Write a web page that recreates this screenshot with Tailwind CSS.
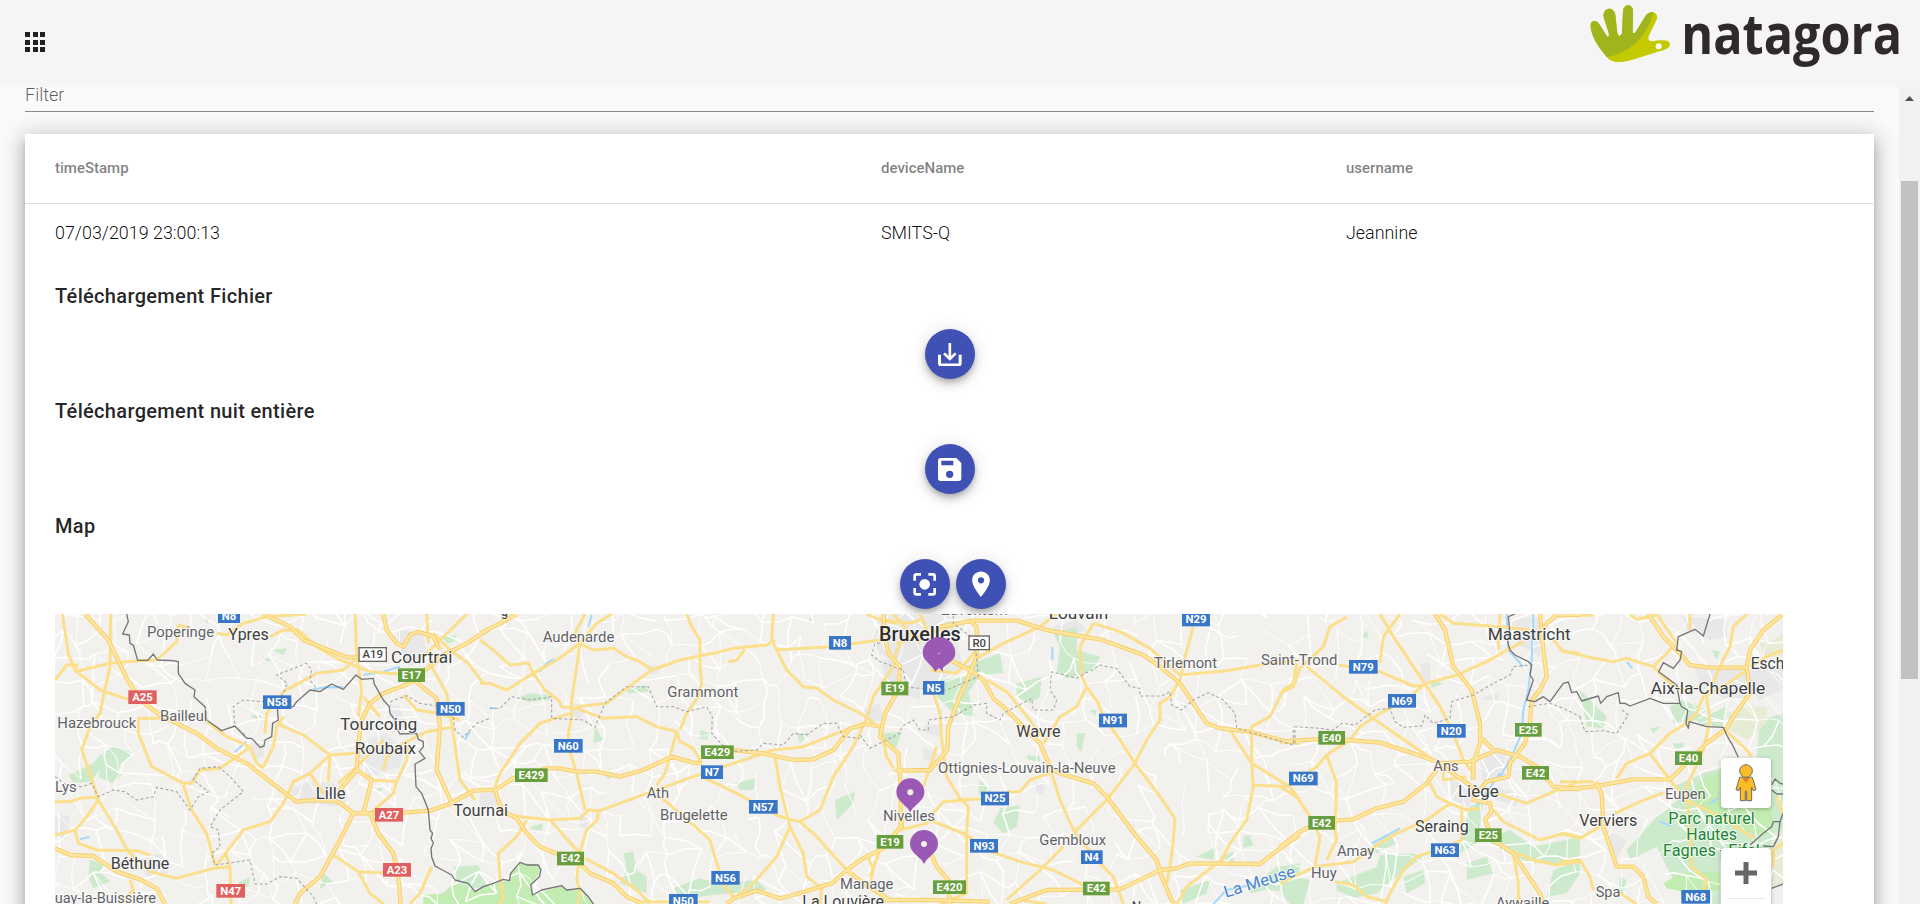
<!DOCTYPE html>
<html lang="fr">
<head>
<meta charset="utf-8">
<title>natagora</title>
<script src="https://cdn.jsdelivr.net/npm/@tailwindcss/browser@4"></script>
</head>
<body class="h-screen overflow-hidden bg-[#fafafa] font-['Roboto',sans-serif] text-black/87 flex flex-col">
<header class="h-[87px] shrink-0 bg-[#f5f5f5] flex items-start justify-between relative z-10">
  <button class="mt-8 ml-[25px] grid grid-cols-3 gap-[2.5px] w-5 h-5" aria-label="menu">
    <span class="bg-[#212121]"></span><span class="bg-[#212121]"></span><span class="bg-[#212121]"></span>
    <span class="bg-[#212121]"></span><span class="bg-[#212121]"></span><span class="bg-[#212121]"></span>
    <span class="bg-[#212121]"></span><span class="bg-[#212121]"></span><span class="bg-[#212121]"></span>
  </button>
  <svg class="w-[360px] h-[87px]" viewBox="0 0 1080 261">
    <defs><clipPath id="hand"><path d="M92 84C86 62 110 54 120 76L142 110Q149 112 146 98L131 52C126 22 161 16 166 44L172 100Q178 117 186 100L189 32C191 10 218 10 219 32L218 95Q219 104 227 96L254 52C264 30 296 32 291 56L266 109Q262 122 275 124C298 120 330 116 330 133C330 148 305 152 285 158L207 182C172 190 152 188 138 168C114 140 97 112 92 84Z"/></clipPath></defs>
    <g clip-path="url(#hand)"><rect width="340" height="200" fill="#c5c900"/><path d="M80 0H280V40Q262 100 222 134Q185 164 138 172L80 170Z" fill="#a0b41e"/></g>
    <circle cx="296" cy="139" r="9" fill="#fff"/>
    <text x="364" y="163" textLength="662" lengthAdjust="spacingAndGlyphs" font-family="Open Sans" font-weight="700" font-size="168" fill="#30292a">natagora</text>
  </svg>
</header>
<div class="flex flex-1 min-h-0">
  <main class="flex-1 min-w-0 overflow-hidden pl-[25px] pr-[25px]">
    <div class="h-[25px] border-b border-black/45 text-[18px] leading-[16px] font-light text-black/65"><span class="block">Filter</span></div>
    <section class="mt-[22px] h-[900px] bg-white shadow-[0_5px_6px_-3px_rgba(0,0,0,0.2),0_9px_12px_1px_rgba(0,0,0,0.14),0_3px_22px_3px_rgba(0,0,0,0.2)]">
      <div class="h-[70px] border-b border-black/12 px-[30px] grid grid-cols-[826px_465px_1fr] items-center text-[15px] font-medium text-black/50">
        <span>timeStamp</span><span>deviceName</span><span>username</span>
      </div>
      <div class="h-[60px] pb-0.5 px-[30px] grid grid-cols-[826px_465px_1fr] items-center text-[17.9px] font-light text-black/95">
        <span>07/03/2019 23:00:13</span><span>SMITS-Q</span><span>Jeannine</span>
      </div>
      <div class="pt-4 px-[30px]">
        <h2 class="text-[20px] leading-8 font-medium tracking-[0.33px]"><span>Téléchargement Fichier</span></h2>
        <div class="pt-[17px] pb-4 flex justify-center">
          <button class="size-[50px] rounded-full bg-[#3f51b5] flex items-center justify-center shadow-[0_3px_5px_-1px_rgba(0,0,0,0.2),0_6px_10px_0_rgba(0,0,0,0.14),0_1px_18px_0_rgba(0,0,0,0.12)]">
            <svg class="w-6 h-6" viewBox="0 0 72 72" fill="none" stroke="#fff"><path d="M4.500 38V64Q4.500 69 9.500 69H61.500Q66.500 69 66.500 64V38" stroke-width="9"/><path d="M35.500 3V51M18 34L35.500 51L53 34" stroke-width="8"/></svg>
          </button>
        </div>
        <h2 class="text-[20px] leading-8 font-medium tracking-[0.33px]"><span>Téléchargement nuit entière</span></h2>
        <div class="pt-[17px] pb-4 flex justify-center">
          <button class="size-[50px] rounded-full bg-[#3f51b5] flex items-center justify-center shadow-[0_3px_5px_-1px_rgba(0,0,0,0.2),0_6px_10px_0_rgba(0,0,0,0.14),0_1px_18px_0_rgba(0,0,0,0.12)]">
            <svg class="w-6 h-6" viewBox="0 0 72 72"><path fill="#fff" fill-rule="evenodd" d="M8 3H55L70 18V64Q70 72 62 72H8Q0 72 0 64V11Q0 3 8 3ZM10 11H46V25H10ZM35 41A11 11 0 1 0 35 63A11 11 0 1 0 35 41Z"/></svg>
          </button>
        </div>
        <h2 class="text-[20px] leading-8 font-medium tracking-[0.33px]"><span>Map</span></h2>
        <div class="pt-[17px] pb-[5px] flex justify-center gap-1.5 pl-[7px]">
          <button class="size-[50px] rounded-full bg-[#3f51b5] flex items-center justify-center shadow-[0_3px_5px_-1px_rgba(0,0,0,0.2),0_6px_10px_0_rgba(0,0,0,0.14),0_1px_18px_0_rgba(0,0,0,0.12)]">
            <svg class="w-6 h-6" viewBox="0 0 72 72" fill="none" stroke="#fff" stroke-width="8"><path d="M5 26V12Q5 7 10 7H24M46 7H60Q65 7 65 12V26M65 48V62Q65 67 60 67H46M24 67H10Q5 67 5 62V48"/><circle cx="35" cy="37" r="16" fill="#fff" stroke="none"/></svg>
          </button>
          <button class="size-[50px] rounded-full bg-[#3f51b5] flex items-center justify-center shadow-[0_3px_5px_-1px_rgba(0,0,0,0.2),0_6px_10px_0_rgba(0,0,0,0.14),0_1px_18px_0_rgba(0,0,0,0.12)]">
            <svg class="w-[30px] h-[30px]" viewBox="0 0 24 24" fill="#fff"><path d="M12 2C8.100 2 4.900 5.100 4.900 9c0 5.300 7.100 13.300 7.100 13.300S19.100 14.300 19.100 9c0-3.900-3.200-7-7.100-7zm0 9.500a2.500 2.500 0 1 1 0-5 2.500 2.500 0 0 1 0 5z"/></svg>
          </button>
        </div>
        <div class="relative w-[1728px] h-[290px] overflow-hidden bg-[#f3f1ed]">
          <svg id="map" class="block w-[1728px] h-[290px]" viewBox="0 0 5184 870"></svg>
          <div class="absolute left-[1666px] top-36 size-[50px] bg-white rounded-sm shadow-[0_1px_4px_rgba(0,0,0,0.3)] flex items-center justify-center">
            <svg class="w-[22px] h-[38px]" viewBox="0 0 66 114" stroke="#696969" stroke-width="3"><path fill="#fbbc2a" d="M14 40Q33 36 52 40L63 77L55 80L50 70V110H35V82H31V110H16V70L11 80L3 77Z"/><path fill="#e27b2b" stroke="none" d="M22 42H44L33 57Z"/><circle cx="33" cy="21" r="19" fill="#fbbc2a"/></svg>
          </div>
          <div class="absolute left-[1666px] top-[234px] w-[50px] h-[102px] bg-white rounded-sm shadow-[0_1px_4px_rgba(0,0,0,0.3)]">
            <div class="h-[51px] border-b border-[#e6e6e6] mx-1.5 flex items-center justify-center">
              <svg class="w-[22px] h-[22px]" viewBox="0 0 22 22"><path d="M11 0V22M0 11H22" stroke="#666" stroke-width="5"/></svg>
            </div>
          </div>
        </div>
      </div>
    </section>
  </main>
  <aside class="w-[21px] shrink-0 bg-[#f1f1f1] flex flex-col items-center">
    <svg class="w-[9px] h-[5px] mt-[9px]" viewBox="0 0 9 5"><path d="M0 5L4.500 0L9 5Z" fill="#505050"/></svg>
    <div class="mt-20 w-[17px] h-[498px] bg-[#c1c1c1]"></div>
  </aside>
</div>
<script>
// Map units are thirds of a pixel. Data is grouped by tile, each with its own x offset.
const OX = {a: -15, b: 1275, c: 2415, d: 3675, e: 4515}, OY = -42;
const out = [];
const path = (t, s) => 'M' + s.trim().split(' ').map(p => { const [x, y] = p.split(',').map(Number); return (x + OX[t]) + ' ' + (y + OY); }).join('L');
const join = o => Object.entries(o).map(([t, l]) => l.map(s => path(t, s)).join('')).join('');
const line = (d, c, w, x = '') => out.push(`<path d="${d}" fill="none" stroke="${c}" stroke-width="${w}" stroke-linejoin="round" ${x}/>`);
const area = (o, c) => out.push(`<path d="${Object.entries(o).map(([t, l]) => l.map(s => path(t, s) + 'Z').join('')).join('')}" fill="${c}"/>`);
let seed = 11; const rnd = () => (seed = (seed * 16807) % 2147483647) / 2147483647;

area({
 a: ['770,545 850,550 900,600 860,620 740,605 720,570','940,420 1010,400 1060,450 1050,500 960,530 920,480','1040,90 1120,100 1130,170 1080,200 1050,150','1010,310 1050,320 1070,380 1030,380','15,640 60,650 50,720 15,710','590,440 640,420 640,470 610,480','270,770 340,760 350,820 290,830'],
 b: ['1205,180 1260,170 1320,110 1320,300 1260,280 1210,240','0,580 40,580 60,620 0,620','280,310 320,320 300,360 270,340','505,195 540,200 530,225 500,220','1150,330 1200,310 1210,360 1160,370','300,630 325,640 320,700 300,680'],
 c: ['60,42 270,42 310,200 240,240 220,270 150,270 120,200 60,160 40,120','190,380 250,370 240,410 200,400','520,550 555,555 550,580 525,585','580,80 650,60 680,90 620,110','190,440 235,460 225,485 190,480'],
 d: ['600,480 670,450 700,500 680,540 610,550','510,540 590,560 570,620 515,600','690,60 780,50 780,170 710,130','640,560 720,580 710,620 650,600','420,190 450,190 450,250 425,250','610,290 660,280 650,300 610,300'],
 e: ['400,190 560,210 560,290 500,300 420,260','560,210 669,200 669,270 600,300 560,260','140,690 200,720 170,780 145,750','370,50 500,60 500,110 450,120 380,90']
}, '#e8e8e9');
area({
 a: ['150,465 190,440 245,455 240,480 210,490 215,525 185,550 145,530 150,510 120,545 70,548 55,525 130,490','630,165 665,180 655,185','665,150 710,145 700,165','120,780 160,790 155,820 180,845 130,865 115,830','600,345 635,345 630,357 610,355','1210,800 1285,795 1310,860 1230,870','820,820 850,845 810,865','1180,110 1220,105 1215,125 1190,130','540,860 600,830 595,860','465,60 477,50 473,72','980,565 1010,560 990,575'],
 b: ['120,290 150,280 205,285 210,300 140,305','345,380 370,420 340,430','580,865 660,835 720,850 830,840 860,870 700,885 590,900','660,390 690,400 680,420 660,415','765,550 830,535 820,570 780,570','1065,600 1125,575 1120,610 1070,660','430,760 460,755 470,810 500,830 500,880 420,850 440,810','1210,400 1265,395 1245,440 1220,430','950,400 990,400 960,430','440,270 500,255 505,275 445,280','365,520 395,505 390,540','150,680 190,670 185,690 160,690','990,50 998,70 985,65'],
 c: ['240,240 360,225 325,280 345,350 280,340 230,290','310,200 420,160 430,220 350,225','580,100 650,80 650,150 720,170 700,215 620,235 590,215 600,140','470,250 545,230 540,290 510,310 470,290','70,405 125,395 110,440 80,440','420,625 480,615 470,680 430,700 400,670','360,540 390,570 380,610 355,580','650,400 675,400 665,455 650,440','500,465 540,470 540,485 505,480','960,870 1050,840 1040,880 970,912','1160,855 1200,840 1250,800 1320,790 1320,880 1220,870 1170,880','1080,770 1120,755 1120,790','690,330 710,330 705,350','1150,710 1170,705 1180,735 1150,745','1010,770 1070,740 1060,780'],
 d: ['170,850 290,800 300,765 400,760 430,770 350,830 290,880 220,895 170,870','270,740 330,700 350,730 290,760','570,620 610,600 600,680 590,730 540,760 545,720','370,830 430,810 435,850 380,880','620,720 690,690 760,740 900,710 900,790 750,790 650,740','820,810 900,780 900,820 860,880 800,890','0,880 50,830 90,840 70,912 30,912','560,790 620,770 640,820 560,840','450,240 490,250 455,265','260,90 265,115 245,110','830,90 860,95 840,110'],
 e: ['330,320 370,300 440,330 410,360 340,370','410,360 500,320 490,380 420,375','340,560 430,520 500,500 669,470 669,760 480,780 480,912 380,912 320,800 290,740 210,780 200,750 290,650 380,580','340,430 375,430 360,450 345,448','180,830 200,840 190,880 175,880','60,270 140,350 130,385 80,380','600,360 669,340 669,480 590,470','455,150 480,155 470,180','270,385 300,380 280,400']
}, '#cdeacd');
area({
 a: ['1120,885 1180,880 1215,845 1275,875 1330,858 1330,912 1120,912'],
 b: ['0,865 40,850 88,842 92,820 120,787 175,795 183,810 152,855 158,885 245,857 260,870 300,865 340,912 0,912'],
 e: ['420,540 480,515 480,590 635,590 635,700 560,700 440,640 400,600','310,850 360,820 480,815 480,870 370,875 320,865']
}, '#c3ecb2');
area({e: ['500,340 560,320 620,320 620,370 560,420 510,390','600,130 640,120 669,100 669,170 610,170','635,700 669,690 669,860 635,860']}, '#e6ecd6');

// local road mesh
let g = [], S = 66, C = 82, R = 16, mesh = '', thin = '';
for (let r = 0; r < R; r++) { g.push([]); for (let c = 0; c < C; c++) g[r].push([c * S - 60 + (rnd() - .5) * 58, r * S - 60 + (rnd() - .5) * 58]); }
const seg = (p, q) => { const mx = (p[0] + q[0]) / 2 + (rnd() - .5) * 20, my = (p[1] + q[1]) / 2 + (rnd() - .5) * 20; const d = `M${p[0].toFixed(0)} ${p[1].toFixed(0)}L${mx.toFixed(0)} ${my.toFixed(0)}L${q[0].toFixed(0)} ${q[1].toFixed(0)}`; if (rnd() < .6) mesh += d; else thin += d; };
for (let r = 0; r < R - 1; r++) for (let c = 0; c < C - 1; c++) { if (rnd() < .66) seg(g[r][c], g[r][c + 1]); if (rnd() < .66) seg(g[r][c], g[r + 1][c]); if (rnd() < .26) seg(g[r][c], g[r + 1][c + 1]); }
line(mesh, '#fff', 4.5); line(thin, '#fff', 2.8);

line(join({
 a: ['790,268 830,262 880,262','940,225 1000,215 1050,200','555,455 590,425','425,545 440,520','1245,420 1258,395','90,718 118,710'],
 b: ['180,215 200,190 222,177','325,80 335,45','30,325 48,325'],
 c: ['577,140 577,180','1060,912 1100,870 1200,850'],
 d: ['680,42 685,150 730,200','760,42 755,180 745,270 730,330 725,400 690,480 660,530','275,730 360,685','590,620 660,520'],
 e: ['300,665 335,678','450,610 475,595','200,185 217,205']
}), '#a5d8fb', 6);

line(join({
 a: ['37,42 55,160 75,210 150,270 240,300','75,215 180,190 265,182 320,180 380,125 385,75','182,42 180,200 160,290 150,340 120,380 95,450 130,550 145,600 200,690 235,755 300,815 380,835 490,805 540,800','15,240 50,195 80,195 75,215','330,355 265,355 265,400 305,500 400,550 425,550 450,510 510,505 560,470 595,445','400,555 425,630 470,700 495,795','15,605 60,605 90,595 150,590','145,600 110,650 75,690 15,705','75,690 85,730 140,750 260,752 300,765','470,365 530,410 600,440 620,490 640,505','500,795 580,690 660,665 700,610 730,545 780,520 840,465 920,460','525,755 540,800 543,912','385,75 420,85','500,100 530,105 580,70 650,50 770,42','660,110 700,90 745,90 800,140 870,180 960,215 1080,225','680,370 760,405 840,465 835,545','700,275 650,340 645,400','700,350 680,380 670,440 640,500','700,275 800,220 880,210 925,170','915,42 920,170 935,270 925,350','1130,42 1135,130','1320,250 1300,250 1255,190 1200,150 1150,100','1060,285 1100,330 1165,340 1230,360','1210,380 1130,395 1060,430 1010,470 1000,510','920,510 970,540 1040,545 1070,480 1075,430','1145,200 1190,280 1205,370 1230,540 1275,600','850,765 925,815 1000,818','925,815 960,880 1000,912','1145,800 1110,880 1080,912','780,520 820,580','940,290 990,350','865,550 920,500 1000,420','960,640 1030,580 1040,545','240,840 250,870 210,912','1110,180 1250,42'],
 b: ['0,120 40,150 90,195 145,188 160,220 195,270 235,300 245,320 290,325 370,355 470,350 530,380 590,395 600,425 640,445 665,490','0,250 30,250 80,270 160,220 230,180 300,130 350,70 395,42','315,42 285,100 300,130 290,200 275,300 275,350 265,400 265,440 290,520 315,630','300,130 340,150 400,145 440,170 480,185 515,210 600,180 700,160 760,145 860,135 885,120','290,320 380,310 440,265 515,210','620,42 635,80 660,120 660,200 665,250 655,290 620,340 600,390','590,395 570,470 555,520 530,555','45,560 60,520 120,430 180,370 270,340','880,42 875,120 890,150 1050,140 1220,118','890,150 920,210 970,260 1010,265 1060,300 1150,345 1200,385','745,185 770,180 795,148','80,645 210,660 300,655 325,630 360,632 500,580 640,530 760,490 880,450 970,440 1070,400 1150,370','210,660 295,755','355,632 352,660 320,690 300,755 295,790','315,775 400,820 470,870 510,910','540,590 600,640 690,720 710,790 735,860 765,895','665,530 760,575 900,650 960,665 1010,710 1100,810','885,470 900,560 930,680 890,770 820,850 770,890','930,680 970,760 980,830 1025,865 1020,912','960,665 1020,630 1060,530 1120,440 1160,355 1180,290 1240,200 1250,150 1270,120','1240,512 1320,512','1200,370 1220,470 1240,505','140,660 110,710 55,760 60,840 70,890 60,912','295,790 290,840 300,870 295,912','1160,760 1180,810 1170,850','490,905 690,905','1215,60 1290,70 1320,60'],
 c: ['350,175 430,130 540,80 590,42','380,240 440,275 510,360 545,410','700,70 660,140 665,230 680,260 715,310 730,350 780,420 825,490 900,590 945,655 940,720 930,800 920,850','680,260 650,320 600,350 550,430','700,70 780,95 870,145 960,225','960,225 1100,212 1200,195 1320,180','1000,80 970,190 960,240 930,290 900,310 900,360 860,420 825,490 740,600 645,695','220,280 240,340 245,420 260,530 300,595 325,620 320,700 320,880 240,912','325,600 250,605 220,640','290,598 450,598','440,575 480,575 510,540 580,515','575,520 600,600 645,700 720,790 760,830 790,912','230,440 190,560','120,690 200,670 210,660 320,705 380,750 480,785 580,810 680,860','610,740 540,810 440,900','1110,390 1175,490 1180,560 1160,660 1110,730 1085,780 980,860 950,912','1175,490 1240,530 1290,560 1320,600','1175,490 1175,380 1230,350 1270,270 1300,250 1310,190','30,830 60,750','1180,555 1280,560','100,42 150,100 180,130','110,130 240,90 330,60','180,42 200,90 270,180','210,210 290,220 350,150','20,42 60,60 110,70','480,900 560,912','120,600 130,690'],
 d: ['200,50 150,80 130,140 60,205 40,260 0,280','80,200 190,290 300,370 460,480','175,195 300,215 400,258 440,255','300,190 310,110 360,42','300,42 340,110 400,200 440,260','440,250 530,225 620,185 690,145 730,125','440,260 480,320 520,400 550,480 580,520','430,255 380,300 300,340 240,380 210,420 140,465 110,500 20,560','140,465 170,550 165,690 170,720 140,780','0,560 50,590 90,650 120,710 105,800','480,42 520,70 660,80 750,90','660,42 655,150','820,120 850,155 900,160','450,550 470,590 510,610 560,630 600,625','510,610 440,660 350,700 300,730 220,785 105,800 0,850','545,630 545,720 500,740 410,770 370,810 330,880 315,912','165,845 220,855 260,890 320,905','620,570 680,590 740,610 820,575 900,545','640,630 670,665 720,690 780,720 850,700 900,712','700,755 760,780 830,795 900,785','700,760 715,850 715,912','490,490 490,540 560,530'],
 e: ['0,150 80,170 160,185 200,175 280,200 340,140','290,42 350,130','0,46 100,46','210,45 230,58 290,45','280,200 340,260 400,280','390,42 390,90','560,42 520,80 510,140 480,200 440,290 450,360 430,450 380,560 390,700 395,800 440,840 430,870','560,210 490,260 430,290 410,340 380,370 330,400 270,460 200,490 170,535','270,460 330,540 380,600 500,660 580,715','490,385 560,450 575,470','669,150 620,170 570,200','165,640 240,605 310,578','0,700 60,715 120,680','0,785 60,780 90,830 100,870','180,880 230,912','650,590 669,640','669,730 640,750 640,800','0,545 100,545']
}), '#fbdf8c', 9);
const M = join({
 a: ['105,42 175,120 230,235 270,300 330,345 440,400 500,445 590,490 700,575 740,605 800,600 865,605 910,640 960,640 1060,638 1140,632 1200,612 1270,572 1320,570','640,42 720,80 760,120 890,172 930,172','1000,42 1010,90 1040,130 1060,140 1080,105 1105,95 1150,110 1170,150','1320,85 1250,130 1180,165 1120,215 1080,250 1000,280 960,310 935,360 925,430 920,510 870,570','1090,240 1160,295 1170,380 1160,510 1205,610','910,640 870,720 810,830 750,880 735,912','960,640 985,700 1030,760 1045,830 1052,912','15,745 60,765 130,768 200,815 270,838 320,865 345,912','920,510 965,540 950,600 940,640'],
 b: ['0,100 60,70 110,42','0,570 45,570 100,535 200,505 240,505 290,515 350,515 420,530 490,510 575,470 640,488 665,490','760,450 850,460 940,480 1000,478 1060,450 1110,385 1160,372 1190,378','45,570 65,630 110,655 140,700 180,740 240,765 300,790 330,820 400,850 440,890 490,912','1210,42 1215,110 1225,160 1260,200 1255,270 1215,340 1200,410 1255,460 1262,560 1262,680 1210,745 1150,775 1100,810 1055,850 940,885 900,895 830,872 760,895 740,912','1100,810 1150,850 1230,900 1320,900'],
 c: ['240,80 340,62 470,62 560,90 640,105 720,118 850,165 900,200 960,250 1000,310 1040,370 1080,385 1170,395 1280,425 1320,428','270,180 330,210 370,240 400,295 430,320 500,390 540,430 575,510 600,520 700,550 740,590 830,710 890,780 905,830 930,890 940,912','330,62 350,80 350,170 325,230 295,300 265,380 262,450 210,510 110,512','450,912 480,900 560,870 780,868 860,830 900,810 950,805 990,790 1200,792 1260,745 1320,705','200,730 230,800 265,840 270,912','70,900 200,900 390,905'],
 d: ['0,425 100,418 200,420 300,428 400,460 470,485 540,535 590,570 580,600 630,610 635,635 615,660 640,720 700,760 740,820 780,880 790,912','465,42 495,90 520,200 575,270 600,370 600,430 580,490 580,540','0,740 60,695 120,665 220,658 290,625 370,605 440,550 470,510','780,42 790,150 800,230 780,270 755,300 750,370 735,430 690,490 685,530 620,545 590,580','480,490 570,485 650,450 720,470 770,500 820,560 900,568','605,415 640,450','900,45 830,45 800,70 780,100'],
 e: ['0,568 100,560 220,538 330,538 400,470 440,430 500,385 520,350 570,280 560,200 570,150 610,90 669,42','265,42 310,110 350,150 390,195 450,203 560,203','105,545 125,580 130,680 170,800 220,800 250,830 265,890 290,912']
});
line(M, '#f8cf6b', 13); line(M, '#fee6a0', 7);

line(join({
 a: ['15,530 50,555 95,560 125,550 145,590 190,570 225,575 260,600 310,590 320,562 380,575 420,630 445,590 475,575 430,540 450,505 505,500 540,530 580,575 510,630 480,680 505,690 510,740 485,760 495,795 600,780 615,852 650,852 690,830 740,835 790,890 800,912','585,405 555,380 550,320 580,300 635,305 665,300 690,300 700,280 712,250 680,225 770,190 785,210 780,240 800,265','1020,305 1070,287 1110,310 1160,318','1205,320 1215,390 1240,412 1280,370 1320,355'],
 b: ['30,325 60,325 95,290 150,300 215,290 215,355 310,360 345,382 375,310 440,260 505,260 530,320 580,320 620,335 680,320 697,350 695,400 745,455 830,450 850,430 910,435 940,400 980,405 1030,370 1070,370 1090,410 1140,415'],
 c: ['0,405 30,445 60,430 120,400 125,380 160,360 180,390 205,390 205,360 280,350 340,315 380,310 380,340 420,360 430,340 515,295 520,330 580,330 590,300 570,270 575,215 650,235 720,195 770,205 810,260 840,265 840,288 905,288 930,275 935,315 965,330 1000,300 1045,278 1090,300 1125,340 1130,385 1200,405 1300,435 1300,380','60,130 45,130 35,165 60,185 130,210 140,262 260,270 355,230 345,120 280,70 280,42'],
 d: ['45,430 45,380 120,385 160,390 185,370 225,375 285,330 330,325 345,365 370,382 425,378 435,345 460,370 510,355 515,305 580,285 640,250 690,225 700,200 750,195','745,320 810,310 850,325 900,350'],
 e: ['60,350 75,395 130,392 170,400 205,345 180,325']
}), '#a5a5a5', 3.2, 'stroke-dasharray="9 7"');
line(join({
 a: ['230,42 235,65 218,102 238,105 240,130 250,135 263,181 293,181 310,162 322,180 370,182 385,185 385,220 405,250 435,270 432,290 465,320 470,360 515,392 555,378 590,415 605,415 630,442 642,438 645,420 665,410 668,370 685,360 682,325 730,320 740,305 780,270 810,275 845,252 880,268 918,225 935,238 970,235 972,250 1000,300 1018,320 1020,340 1035,360 1040,385 1050,402 1100,400 1105,418 1120,425 1120,440 1108,455 1125,475 1095,492 1098,560 1115,580 1135,630 1140,690 1148,700 1143,715 1150,730 1143,745 1145,770 1155,798 1205,825 1215,840 1255,850 1275,875 1300,860 1330,850 1360,838 1378,842 1382,820 1410,787 1430,795 1465,795 1473,810 1468,830 1442,855 1448,885 1475,870 1535,857 1550,870 1590,865 1615,890 1630,912'],
 d: ['705,42 685,50 690,100 683,125 690,150 705,165 745,185 755,195 750,225 760,240 740,300 765,305 790,290 810,305 850,250 865,246 875,278 890,275 905,303 955,288 962,310 980,290 1015,278 1020,310 1035,310 1050,318 1110,295 1150,310 1200,310 1205,320 1223,330 1218,370 1225,385 1228,365 1280,380 1330,382 1340,405 1360,440 1375,472'],
 e: ['450,42 430,108 405,88 355,110 350,150 365,155 360,180 340,205 310,188 296,215 350,255 360,310','635,555 645,537 660,550 669,552','635,570 650,582 669,582','570,735 610,700 635,680 640,665 660,665 655,710 640,740 610,738','669,640 660,665','635,865 669,852']
}), '#757575', 4);

// place labels: tile, x, baseline, width, text, size, colour, weight
const D = '#3c3f42', L = '#5f6368', G = '#1e8536';
const label = ([t, x, y, w, s, z, c, k = 400, rot = 0]) => out.push(`<text x="${x + OX[t]}" y="${y + OY}" textLength="${w}" lengthAdjust="spacingAndGlyphs" font-family="Roboto" font-size="${z + 1}" font-weight="${k}" fill="${c}" stroke="#fff" stroke-opacity=".7" stroke-width="6" stroke-linejoin="round" paint-order="stroke" ${rot ? `transform="rotate(${rot} ${x + OX[t]} ${y + OY})"` : ''}>${s}</text>`);
[['a',291,110,201,'Poperinge',45,L],['a',535,121,121,'Ypres',49,D],['a',1023,188,184,'Courtrai',51,D],['a',22,385,237,'Hazebrouck',45,L],['a',330,364,142,'Bailleul',45,L],['a',870,391,232,'Tourcoing',51,D],['a',914,461,184,'Roubaix',51,D],['a',15,576,65,'Lys',45,L],['a',797,597,90,'Lille',51,D],['a',1210,648,164,'Tournai',49,D],['a',182,808,176,'Béthune',51,D],['a',14,908,304,'uay-la-Buissière',44,L],
['b',188,126,215,'Audenarde',45,L],['b',62,47,22,'g',45,D],['b',562,291,213,'Grammont',45,L],['b',500,593,67,'Ath',45,L],['b',540,660,203,'Brugelette',45,L],['b',1080,867,160,'Manage',45,L],['b',967,921,245,'La Louvière',47,D],
['c',57,122,245,'Bruxelles',57,'#2b2d30',500],['c',243,46,200,'Zaventem',45,L],['c',566,57,179,'Louvain',49,D],['c',882,205,189,'Tirlemont',45,L],['c',469,410,133,'Wavre',48,D],['c',234,518,533,'Ottignies-Louvain-la-Neuve',45,L],['c',69,662,156,'Nivelles',45,L],['c',538,734,200,'Gembloux',45,L],['c',1203,194,229,'Saint-Trond',45,L],['c',815,938,120,'Namur',50,D],['c',1097,893,222,'La Meuse',48,'#4a83cf',400,-17],
['d',623,119,249,'Maastricht',49,D],['d',460,514,76,'Ans',45,L],['d',534,591,122,'Liège',51,D],['d',405,696,161,'Seraing',49,D],['d',171,769,112,'Amay',45,L],['d',93,834,77,'Huy',45,L],['d',648,925,160,'Aywaille',45,L],
['e',272,283,344,'Aix-la-Chapelle',50,D],['e',572,206,224,'Eschweiler',49,D],['e',315,596,122,'Eupen',45,L],['e',58,678,174,'Verviers',48,D],['e',107,890,74,'Spa',45,L],['e',325,672,259,'Parc naturel',47,G],['e',379,719,152,'Hautes',47,G],['e',309,768,290,'Fagnes - Eifel',47,G]].forEach(label);

// road shields: tile, x, y, width, text
const kinds = {A: '#e15f60', N: '#3876c9', E: '#689f3e', W: '#fff'};
[['a',504,28,66,'N8'],['a',927,143,82,'A19','W'],['a',1044,205,81,'E17'],['a',235,271,85,'A25'],['a',639,286,85,'N58'],['a',1159,306,85,'N50'],['a',975,624,84,'A27'],['a',999,789,84,'A23'],['a',499,852,86,'N47','A'],
['b',1047,108,66,'N8'],['b',222,417,86,'N60'],['b',663,436,98,'E429'],['b',105,505,98,'E429'],['b',663,496,66,'N7'],['b',807,600,86,'N57'],['b',231,755,81,'E42'],['b',694,813,85,'N56'],['b',567,882,86,'N50'],
['c',327,108,61,'R0','W'],['c',64,245,81,'E19'],['c',189,243,64,'N5'],['c',966,38,84,'N29'],['c',717,341,84,'N91'],['c',363,575,84,'N25'],['c',50,705,80,'E19'],['c',330,717,84,'N93'],['c',663,751,65,'N4'],['c',219,841,99,'E420'],['c',669,845,80,'E42'],
['d',207,180,86,'N79'],['d',324,282,84,'N69'],['d',471,372,86,'N20'],['d',705,369,80,'E25'],['d',115,393,80,'E40'],['d',27,515,86,'N69'],['d',726,498,81,'E42'],['d',85,648,80,'E42'],['d',585,685,80,'E25'],['d',453,730,84,'N63'],
['e',345,454,81,'E40'],['e',364,870,86,'N68']].forEach(([t, x, y, w, s, k]) => {
  const white = k === 'W', X = x + OX[t], Y = y + OY;
  out.push(`<rect x="${X}" y="${Y}" width="${w}" height="41" fill="${kinds[k || s[0]]}" ${white ? 'stroke="#666" stroke-width="4"' : ''}/><text x="${X + w / 2}" y="${Y + 32}" text-anchor="middle" font-family="Roboto" font-weight="${white ? 500 : 700}" font-size="34" fill="${white ? '#444' : '#fff'}">${s}</text>`);
});

// pins: centre x, centre y, radius, hole radius
[[237,160,49,2],[151,577,42,9],[192,732,42,9]].forEach(([x, y, r, h]) => {
  const X = x + OX.c, Y = y + OY, tip = r > 45 ? `L${X + 12} ${Y + 55}L${X} ${Y + 44}L${X - 12} ${Y + 55}` : `Q${X + 8} ${Y + 45} ${X} ${Y + 60}Q${X - 8} ${Y + 45} ${X - 20} ${Y + 37}`;
  out.push(`<path fill="#9b59b6" d="M${X - r} ${Y}A${r} ${r} 0 1 1 ${X + r} ${Y}C${X + r} ${Y + 22} ${X + 20} ${Y + 34} ${X + 12} ${Y + 44}${tip}C${X - 20} ${Y + 34} ${X - r} ${Y + 22} ${X - r} ${Y}Z"/><circle cx="${X}" cy="${Y}" r="${h}" fill="#f3efdf"/>`);
});
document.getElementById('map').innerHTML = out.join('');
</script>
</body>
</html>
